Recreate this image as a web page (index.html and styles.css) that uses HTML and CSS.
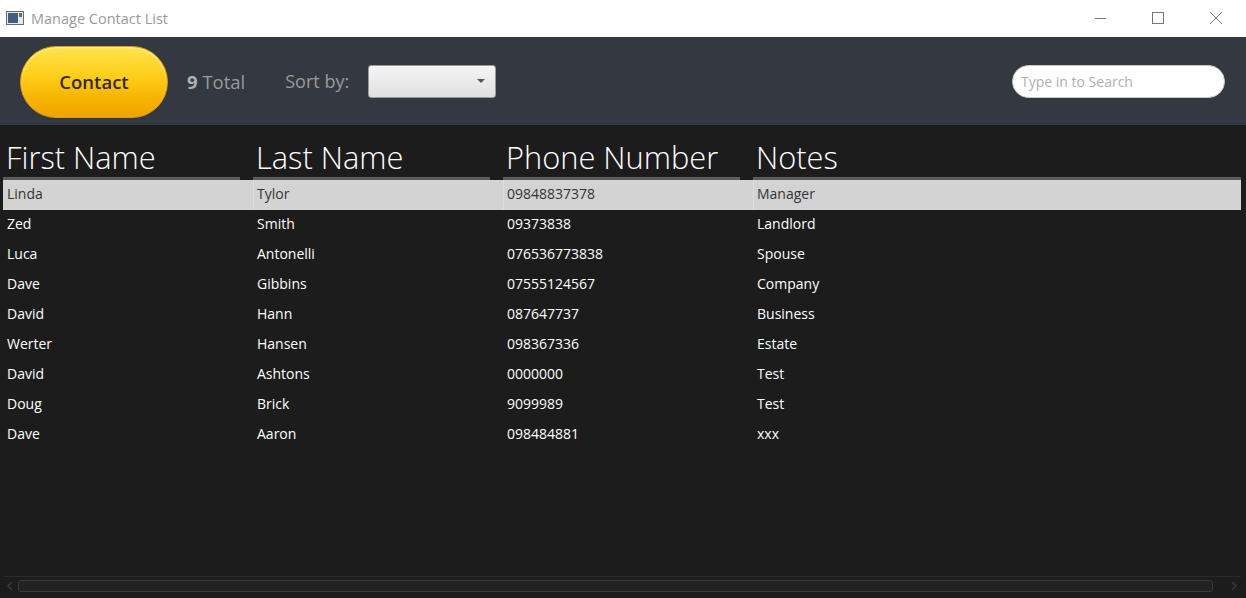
FILE: index.html
```html
<!DOCTYPE html>
<html>
<head>
<meta charset="utf-8">
<title>Manage Contact List</title>
<link rel="stylesheet" href="styles.css">
</head>
<body>
<div class="window">
  <div class="titlebar">
    <div class="title-left">
      <svg class="app-icon" width="18" height="14" viewBox="0 0 18 14">
        <rect x="0.5" y="0.5" width="17" height="13" fill="#e8e8e8" stroke="#6a6a6a"/>
        <rect x="2" y="2" width="10" height="10" fill="#3f5f80"/>
        <rect x="13" y="2" width="3" height="4" fill="#6a6a6a"/>
      </svg>
      <span class="title-text">Manage Contact List</span>
    </div>
    <div class="win-controls">
      <svg class="ctl" width="58" height="37" viewBox="0 0 58 37"><line x1="23" y1="18.5" x2="34" y2="18.5" stroke="#777" stroke-width="1"/></svg>
      <svg class="ctl" width="58" height="37" viewBox="0 0 58 37"><rect x="22.5" y="12.5" width="11" height="11" fill="none" stroke="#777" stroke-width="1"/></svg>
      <svg class="ctl" width="58" height="37" viewBox="0 0 58 37"><path d="M22 12 L34 24 M34 12 L22 24" stroke="#777" stroke-width="1"/></svg>
    </div>
  </div>

  <div class="toolbar">
    <button class="contact-btn">Contact</button>
    <div class="total"><b>9</b> Total</div>
    <div class="sort-label">Sort by:</div>
    <div class="combo"><span class="combo-arrow"></span></div>
    <div class="spacer"></div>
    <input class="search" type="text" placeholder="Type in to Search">
  </div>

  <div class="table-area">
    <div class="table">
      <div class="head">
        <div class="hcell"><span>First Name</span></div>
        <div class="hcell"><span>Last Name</span></div>
        <div class="hcell"><span>Phone Number</span></div>
        <div class="hcell last"><span>Notes</span></div>
      </div>
      <div class="row selected"><div class="cell">Linda</div><div class="cell">Tylor</div><div class="cell">09848837378</div><div class="cell">Manager</div></div>
      <div class="row"><div class="cell">Zed</div><div class="cell">Smith</div><div class="cell">09373838</div><div class="cell">Landlord</div></div>
      <div class="row"><div class="cell">Luca</div><div class="cell">Antonelli</div><div class="cell">076536773838</div><div class="cell">Spouse</div></div>
      <div class="row"><div class="cell">Dave</div><div class="cell">Gibbins</div><div class="cell">07555124567</div><div class="cell">Company</div></div>
      <div class="row"><div class="cell">David</div><div class="cell">Hann</div><div class="cell">087647737</div><div class="cell">Business</div></div>
      <div class="row"><div class="cell">Werter</div><div class="cell">Hansen</div><div class="cell">098367336</div><div class="cell">Estate</div></div>
      <div class="row"><div class="cell">David</div><div class="cell">Ashtons</div><div class="cell">0000000</div><div class="cell">Test</div></div>
      <div class="row"><div class="cell">Doug</div><div class="cell">Brick</div><div class="cell">9099989</div><div class="cell">Test</div></div>
      <div class="row"><div class="cell">Dave</div><div class="cell">Aaron</div><div class="cell">098484881</div><div class="cell">xxx</div></div>
    </div>
    <div class="hscroll">
      <svg class="arrow" width="14" height="14" viewBox="0 0 14 14"><path d="M9 3 L5 7 L9 11" fill="none" stroke="#3a3a3a" stroke-width="1.5"/></svg>
      <div class="track"></div>
      <svg class="arrow right" width="27" height="14" viewBox="0 0 27 14"><path d="M18 3 L22 7 L18 11" fill="none" stroke="#3a3a3a" stroke-width="1.5"/></svg>
    </div>
  </div>
</div>
</body>
</html>
```

FILE: styles.css
```css
* { box-sizing: border-box; }
html, body { margin: 0; padding: 0; }
body {
  width: 1246px;
  height: 598px;
  overflow: hidden;
  font-family: "Open Sans", "Noto Sans", sans-serif;
  background: #1c1c1c;
}
.window {
  display: flex;
  flex-direction: column;
  height: 598px;
}
.titlebar {
  height: 37px;
  background: #ffffff;
  display: flex;
  align-items: center;
  justify-content: space-between;
}
.title-left {
  display: flex;
  align-items: center;
  padding-left: 6px;
}
.app-icon { margin-top: -1px; }
.title-text {
  margin-left: 7px;
  font-size: 14.5px;
  color: #9a9a9a;
}
.win-controls {
  display: flex;
  align-items: center;
}
.ctl { display: block; }

.toolbar {
  height: 88px;
  background: #343840;
  display: flex;
  align-items: center;
  padding-left: 20px;
  padding-right: 21px;
}
.contact-btn {
  width: 148px;
  height: 72px;
  border-radius: 36px;
  border: 1px solid #e09d00;
  background: linear-gradient(to bottom, #ffe34e 0%, #ffcf1a 40%, #f6b300 75%, #efa300 100%);
  box-shadow: inset 0 1px 2px rgba(255,255,255,0.6);
  font-family: "Open Sans", sans-serif;
  font-weight: 600;
  font-size: 18.5px;
  color: #2e2a22;
  padding: 0;
  margin-top: 1px;
}
.total {
  margin-left: 19px;
  font-size: 18.5px;
  color: #9a9a9a;
}
.total b { color: #b0b0b0; font-weight: 700; }
.sort-label {
  margin-left: 40px;
  font-size: 18px;
  color: #9a9a9a;
}
.combo {
  margin-left: 19px;
  width: 128px;
  height: 33px;
  border: 1px solid #9a9a9a;
  border-radius: 3px;
  background: linear-gradient(to bottom, #f5f5f5, #e0e0e0);
  display: flex;
  align-items: center;
  justify-content: flex-end;
  padding-right: 10px;
}
.combo-arrow {
  width: 0; height: 0;
  border-left: 4px solid transparent;
  border-right: 4px solid transparent;
  border-top: 4px solid #555;
}
.spacer { flex: 1; }
.search {
  width: 213px;
  height: 33px;
  border-radius: 17px;
  border: 1px solid #c8c8c8;
  background: #ffffff;
  font-family: "Open Sans", sans-serif;
  font-size: 14px;
  padding: 0 8px;
  outline: none;
}
.search::placeholder { color: #b0b0b0; }

.table-area {
  flex: 1;
  display: flex;
  flex-direction: column;
  background: #1c1c1c;
  padding: 0 5px 3px 3px;
}
.table { flex: 1; }
.head {
  display: grid;
  grid-template-columns: 250px 250px 250px 1fr;
  padding-top: 12px;
}
.hcell span {
  display: block;
  margin-right: 13px;
  padding-left: 3px;
  font-size: 30.8px;
  font-weight: 300;
  color: #ffffff;
  line-height: 40px;
  border-bottom: 3px solid #5c5c5c;
}
.hcell.last span { margin-right: 0; }
.row {
  display: grid;
  grid-template-columns: 250px 250px 250px 1fr;
  height: 30px;
  align-items: center;
  color: #ffffff;
  font-size: 14px;
}
.cell {
  padding-left: 4px;
  height: 30px;
  line-height: 28px;
}
.row.selected {
  background: #d3d3d3;
  color: #333333;
}
.row.selected .cell + .cell { border-left: 1px solid #dedede; padding-left: 3px; }

.hscroll {
  height: 19px;
  border-top: 1px solid #2a2a2a;
  display: flex;
  align-items: center;
  gap: 1px;
}
.arrow { display: block; flex: none; }
.track {
  flex: 1;
  height: 12px;
  border: 1px solid #3a3a3a;
  border-radius: 3px;
  background: #222222;
}
```
